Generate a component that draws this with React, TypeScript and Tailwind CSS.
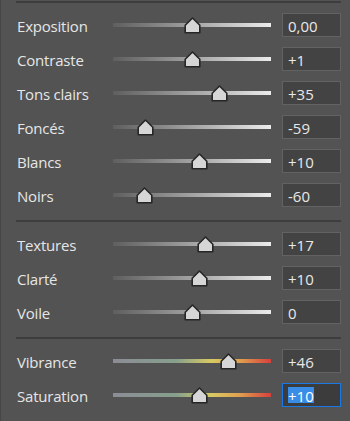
type Row = { label: string; value: string; pos: number; color?: boolean; focused?: boolean };

const sections: Row[][] = [
  [
    { label: "Exposition", value: "0,00", pos: 0 },
    { label: "Contraste", value: "+1", pos: 1 },
    { label: "Tons clairs", value: "+35", pos: 35 },
    { label: "Foncés", value: "-59", pos: -59 },
    { label: "Blancs", value: "+10", pos: 10 },
    { label: "Noirs", value: "-60", pos: -60 },
  ],
  [
    { label: "Textures", value: "+17", pos: 17 },
    { label: "Clarté", value: "+10", pos: 10 },
    { label: "Voile", value: "0", pos: 0 },
  ],
  [
    { label: "Vibrance", value: "+46", pos: 46, color: true },
    { label: "Saturation", value: "+10", pos: 10, color: true, focused: true },
  ],
];

const TRACK_W = 158;

function Thumb() {
  return (
    <svg width="17" height="17" viewBox="0 0 17 17">
      <path
        d="M8.5 1 L15.8 8.3 L15.8 15.8 L1.2 15.8 L1.2 8.3 Z"
        fill="#d6d6d6"
        stroke="#262626"
        strokeWidth="1.6"
        strokeLinejoin="round"
      />
    </svg>
  );
}

function Slider({ pos, color }: { pos: number; color?: boolean }) {
  const center = TRACK_W / 2 + (pos / 100) * (TRACK_W / 2);
  return (
    <div className="relative w-[158px] h-[24px] flex items-center">
      <div
        className={
          color
            ? "w-full h-[4px] bg-[linear-gradient(to_right,#8c8c96_0%,#86a08c_40%,#d8ca62_62%,#e0a050_80%,#d6403c_100%)]"
            : "w-full h-[4px] bg-gradient-to-r from-[#5f5f5f] to-[#ececec]"
        }
      />
      <div className="absolute top-[4px]" style={{ left: center - 8.5 }}>
        <Thumb />
      </div>
    </div>
  );
}

function SliderRow({ row }: { row: Row }) {
  return (
    <div className="flex items-center h-[24px]">
      <div className="w-[97px] pl-[1px] pt-[2px] text-[15px] text-[#e6e6e6] leading-[22px] tracking-[-0.2px]">
        {row.label}
      </div>
      <Slider pos={row.pos} color={row.color} />
      <div
        className={
          row.focused
            ? "ml-[11px] w-[59px] h-[24px] border border-[#1b78e5] bg-[#3c3c3c] pl-[5px] flex items-center"
            : "ml-[11px] w-[59px] h-[24px] border border-[#626262] bg-[#434343] pl-[5px] flex items-center"
        }
      >
        {row.focused ? (
          <span className="inline-block h-[16px] leading-[16px] pt-[1px] bg-[#3a8de6] text-white text-[15px]">
            {row.value}
          </span>
        ) : (
          <span className="pt-[2px] text-[15px] text-[#e8e8e8] leading-[20px]">{row.value}</span>
        )}
      </div>
    </div>
  );
}

export default function App() {
  return (
    <div
      className="w-[350px] h-[421px] bg-[#535353] border-l border-[#464646] pl-[15px] pr-[9px] overflow-hidden"
      style={{ fontFamily: '"Open Sans", "Noto Sans", sans-serif' }}
    >
      <div className="mt-[1px] h-[2px] bg-[#3e3e3e]" />
      {sections.map((rows, i) => (
        <div key={i}>
          {i > 0 && <div className="mt-[13px] mb-[10px] h-[2px] bg-[#3e3e3e]" />}
          <div className={i === 0 ? "mt-[10px] flex flex-col gap-[10px]" : "flex flex-col gap-[10px]"}>
            {rows.map((r) => (
              <SliderRow key={r.label} row={r} />
            ))}
          </div>
        </div>
      ))}
    </div>
  );
}
